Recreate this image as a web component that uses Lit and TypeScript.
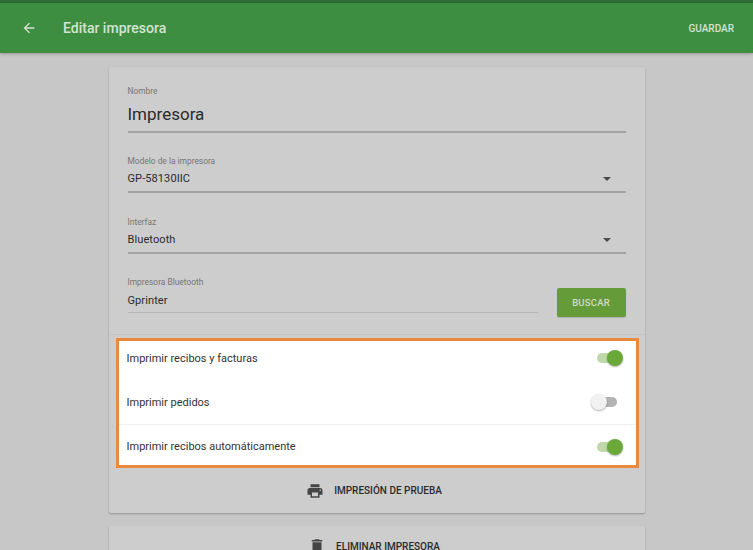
import { LitElement, html, css } from "lit";
import { customElement } from "lit/decorators.js";

@customElement("app-root")
export class AppRoot extends LitElement {
  static styles = css`
    :host { display: block; width: 753px; height: 550px; overflow: hidden; background: #c7c7c7; font-family: Roboto, "Liberation Sans", sans-serif; color: #2b2b2b; }
    .status { height: 3px; background: #2f6e32; }
    .bar { height: 50px; box-sizing: border-box; background: #3e8e41; display: flex; align-items: center; padding: 0 19px 0 21px; color: #d3e4d3; box-shadow: 0 1px 3px rgba(0,0,0,.25); }
    .bar svg { width: 16px; height: 16px; display: block; }
    .title { font-size: 14px; font-weight: 500; margin-left: 26px; flex: 1; }
    .save { font-size: 10px; font-weight: 500; }
    .content { width: 536px; margin: 14px auto 0; display: flex; flex-direction: column; gap: 13px; }
    .card { background: #cdcdcd; border-radius: 2px; box-shadow: 0 1px 2px rgba(0,0,0,.28); }
    .fields { padding: 0 19px; display: flex; flex-direction: column; height: 268px; box-sizing: border-box; border-bottom: 1px solid #c4c4c4; }
    .field { display: flex; flex-direction: column; border-bottom: 2px solid #a3a3a3; position: relative; box-sizing: border-box; }
    .label { font-size: 8.4px; line-height: 10px; color: #767676; }
    .value { font-size: 11px; line-height: 14px; color: #2b2b2b; margin-top: 6px; letter-spacing: .1px; }
    .f1 { height: 66px; padding-top: 19px; }
    .f1 .value { font-size: 17px; line-height: 22px; margin-top: 7px; letter-spacing: 0; }
    .f2 { height: 46px; margin-top: 14px; padding-top: 9px; }
    .f3 { margin-top: 15px; }
    .caret { position: absolute; right: 15px; bottom: 10px; width: 0; height: 0; border: 4px solid transparent; border-top: 4px solid #4a4a4a; border-bottom: 0; }
    .search { display: flex; align-items: flex-end; gap: 19px; margin-top: 14px; }
    .f4 { flex: 1; height: 45px; padding-top: 9px; border-bottom: 1px solid #b5b5b5; margin-bottom: 4px; }
    .f4 .value { margin-top: 7px; }
    .btn { width: 69px; height: 29px; background: #659b38; color: #cfdcc4; font-size: 9.5px; font-weight: 500; letter-spacing: .2px; display: flex; align-items: center; justify-content: center; border-radius: 2px; box-shadow: 0 1px 1px rgba(0,0,0,.15); }
    .panel { margin: 3px 6px 0 7px; border: 3px solid #e98a3f; background: #fff; height: 130px; box-sizing: border-box; display: flex; flex-direction: column; }
    .row { box-sizing: border-box; height: 44px; display: flex; align-items: center; justify-content: space-between; padding: 0 13px 0 8px; font-size: 11px; color: #333; }
    .first { height: 39px; padding-bottom: 5px; }
    .last { height: 41px; padding-top: 3px; border-top: 1px solid #eeeeee; }
    .sw { width: 28px; height: 16px; position: relative; flex: none; }
    .track { position: absolute; left: 2px; right: 2px; top: 3px; height: 10px; border-radius: 5px; }
    .knob { position: absolute; top: 0; width: 16px; height: 16px; border-radius: 50%; box-shadow: 0 1px 2px rgba(0,0,0,.3); }
    .on .track { background: #c0d9aa; }
    .on .knob { right: 0; background: #6aa83a; }
    .off .track { background: #b3b3b3; left: 7px; right: 6px; }
    .off .knob { left: -4px; background: #f1f1f1; }
    .action { height: 45px; display: flex; align-items: center; justify-content: center; gap: 10px; padding-right: 5px; font-size: 10px; font-weight: 500; color: #2b2b2b; }
    .action svg { width: 18px; height: 18px; display: block; fill: #444; }
    .a2 { height: 40px; }
  `;

  private sw(on: boolean) {
    return html`<div class="sw ${on ? "on" : "off"}"><div class="track"></div><div class="knob"></div></div>`;
  }

  render() {
    return html`
      <div class="status"></div>
      <div class="bar">
        <svg viewBox="0 0 24 24" fill="#d3e4d3"><path d="M20 11H7.83l5.59-5.59L12 4l-8 8 8 8 1.41-1.41L7.83 13H20v-2z"/></svg>
        <div class="title">Editar impresora</div>
        <div class="save">GUARDAR</div>
      </div>
      <div class="content">
        <div class="card">
          <div class="fields">
            <div class="field f1"><div class="label">Nombre</div><div class="value">Impresora</div></div>
            <div class="field f2"><div class="label">Modelo de la impresora</div><div class="value">GP-58130IIC</div><div class="caret"></div></div>
            <div class="field f2 f3"><div class="label">Interfaz</div><div class="value">Bluetooth</div><div class="caret"></div></div>
            <div class="search">
              <div class="field f4"><div class="label">Impresora Bluetooth</div><div class="value">Gprinter</div></div>
              <div class="btn">BUSCAR</div>
            </div>
          </div>
          <div class="panel">
            <div class="row first"><span>Imprimir recibos y facturas</span>${this.sw(true)}</div>
            <div class="row"><span>Imprimir pedidos</span>${this.sw(false)}</div>
            <div class="row last"><span>Imprimir recibos automáticamente</span>${this.sw(true)}</div>
          </div>
          <div class="action">
            <svg viewBox="0 0 24 24"><path d="M19 8H5c-1.66 0-3 1.34-3 3v6h4v4h12v-4h4v-6c0-1.66-1.34-3-3-3zm-3 11H8v-5h8v5zm3-7c-.55 0-1-.45-1-1s.45-1 1-1 1 .45 1 1-.45 1-1 1zm-1-9H6v4h12V3z"/></svg>
            <span>IMPRESIÓN DE PRUEBA</span>
          </div>
        </div>
        <div class="card a2 action">
          <svg viewBox="0 0 24 24"><path d="M6 19c0 1.1.9 2 2 2h8c1.1 0 2-.9 2-2V7H6v12zM19 4h-3.5l-1-1h-5l-1 1H5v2h14V4z"/></svg>
          <span>ELIMINAR IMPRESORA</span>
        </div>
      </div>
    `;
  }
}
